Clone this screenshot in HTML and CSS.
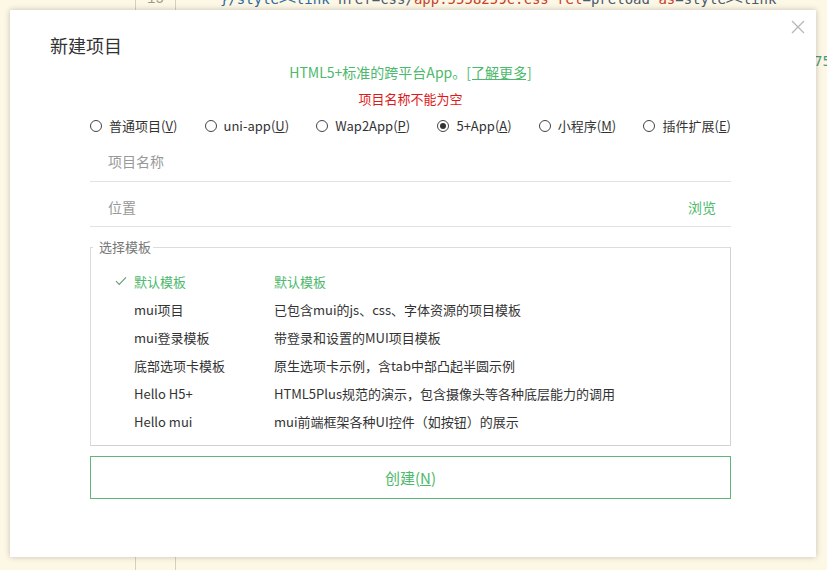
FILE: index.html
```html
<!DOCTYPE html>
<html lang="zh-CN">
<head>
<meta charset="utf-8">
<title>新建项目</title>
<link rel="stylesheet" href="styles.css">
</head>
<body>
<div class="editor">
  <div class="margin"></div>
  <div class="gutter"><div class="lineno">15</div></div>
  <div class="code">
    <div class="codeline"><span class="c-tag">}/style&gt;&lt;link</span> <span class="c-attr">href</span>=<span class="c-attr">css/</span><span class="c-str">app.5558259c.css</span> <span class="c-str">rel</span>=<span class="c-attr">preload</span> <span class="c-str">as</span>=<span class="c-attr">style&gt;&lt;link</span></div>
    <div class="codeline side"><span class="c-num">75</span></div>
  </div>
</div>

<div class="dialog">
  <div class="dlg-head">
    <h1 class="dlg-title">新建项目</h1>
    <svg class="close" width="14" height="14" viewBox="0 0 14 14"><path d="M1 1L13 13M13 1L1 13" stroke="#b5b5b5" stroke-width="1.2" fill="none"/></svg>
  </div>
  <div class="dlg-body">
    <p class="intro">HTML5+标准的跨平台App。<a class="more">[了解更多]</a></p>
    <p class="error">项目名称不能为空</p>
    <div class="radios">
      <label class="radio"><span class="dot"></span>普通项目(<u>V</u>)</label>
      <label class="radio"><span class="dot"></span>uni-app(<u>U</u>)</label>
      <label class="radio"><span class="dot"></span>Wap2App(<u>P</u>)</label>
      <label class="radio"><span class="dot on"></span>5+App(<u>A</u>)</label>
      <label class="radio"><span class="dot"></span>小程序(<u>M</u>)</label>
      <label class="radio"><span class="dot"></span>插件扩展(<u>E</u>)</label>
    </div>
    <div class="field first"><span class="ph">项目名称</span></div>
    <div class="field"><span class="ph">位置</span><span class="browse">浏览</span></div>
    <fieldset class="tpl">
      <legend>选择模板</legend>
      <div class="tpl-list">
        <div class="tpl-row sel"><span class="chk"><svg width="12" height="10" viewBox="0 0 12 10"><path d="M1 5.2L4.2 8.4L11 1.4" stroke="#6a9e76" stroke-width="1.2" fill="none"/></svg></span><span class="name">默认模板</span><span class="desc">默认模板</span></div>
        <div class="tpl-row"><span class="chk"></span><span class="name">mui项目</span><span class="desc">已包含mui的js、css、字体资源的项目模板</span></div>
        <div class="tpl-row"><span class="chk"></span><span class="name">mui登录模板</span><span class="desc">带登录和设置的MUI项目模板</span></div>
        <div class="tpl-row"><span class="chk"></span><span class="name">底部选项卡模板</span><span class="desc">原生选项卡示例，含tab中部凸起半圆示例</span></div>
        <div class="tpl-row"><span class="chk"></span><span class="name">Hello H5+</span><span class="desc">HTML5Plus规范的演示，包含摄像头等各种底层能力的调用</span></div>
        <div class="tpl-row"><span class="chk"></span><span class="name">Hello mui</span><span class="desc">mui前端框架各种UI控件（如按钮）的展示</span></div>
      </div>
    </fieldset>
    <button class="create">创建(<u>N</u>)</button>
  </div>
</div>
</body>
</html>
```

FILE: styles.css
```css
html, body {
  margin: 0;
  padding: 0;
  width: 827px;
  height: 570px;
  overflow: hidden;
  background: #fdf7e6;
  font-family: "Noto Sans CJK SC", "Noto Sans", sans-serif;
}

.editor {
  display: flex;
  height: 570px;
}
.margin {
  width: 135px;
  flex: none;
}
.gutter {
  width: 39px;
  flex: none;
  border-left: 1px solid #d8cfb8;
  border-right: 1px solid #d8cfb8;
}
.lineno {
  margin-top: -9px;
  text-align: center;
  font: 14px "Liberation Mono", monospace;
  color: #9a9a8a;
  line-height: 16px;
}
.code {
  flex: 1;
  padding-left: 44px;
  font: 14px "DejaVu Sans Mono", "Liberation Mono", monospace;
  line-height: 16px;
}
.codeline {
  margin-top: -9px;
  white-space: nowrap;
  color: #4a5a70;
}
.codeline.side {
  margin-top: 46px;
  padding-left: 594px;
}
.c-tag { color: #2a6aa0; }
.c-attr { color: #4a5a70; }
.c-str { color: #c8402a; }
.c-num { color: #4a9a7a; }

.dialog {
  position: absolute;
  left: 10px;
  top: 10px;
  width: 806px;
  height: 547px;
  background: #fff;
  box-shadow: 0 0 6px rgba(0, 0, 0, 0.22);
  box-sizing: border-box;
}
.dlg-head {
  display: flex;
  justify-content: space-between;
  align-items: flex-start;
  padding: 10px 11px 0 40px;
}
.dlg-title {
  margin: 0;
  padding-top: 12px;
  font-size: 18px;
  font-weight: normal;
  color: #333;
  line-height: 26px;
}
.dlg-body {
  padding: 0 85px 0 80px;
}
.intro {
  margin: 4px 0 0;
  text-align: center;
  font-size: 14px;
  line-height: 20px;
  color: #4cb96c;
}
.more {
  text-decoration: underline;
  color: #4cb96c;
}
.error {
  margin: 8px 0 0;
  text-align: center;
  font-size: 13px;
  line-height: 18px;
  color: #dd1a1a;
}
.radios {
  display: flex;
  justify-content: space-between;
  margin-top: 9px;
  height: 18px;
  align-items: center;
}
.radio {
  display: flex;
  align-items: center;
  font-size: 13px;
  color: #333;
  line-height: 18px;
}
.radio u { text-decoration: underline; }
.dot {
  width: 12px;
  height: 12px;
  border: 1px solid #444;
  border-radius: 50%;
  margin-right: 7px;
  box-sizing: border-box;
  display: flex;
  align-items: center;
  justify-content: center;
}
.dot.on::after {
  content: "";
  width: 6px;
  height: 6px;
  border-radius: 50%;
  background: #333;
}
.field {
  display: flex;
  justify-content: space-between;
  align-items: center;
  box-sizing: border-box;
  height: 45px;
  padding: 5px 15px 0 18px;
  border-bottom: 1px solid #e2e2e2;
  font-size: 14px;
}
.field.first {
  height: 47px;
}
.ph { color: #999; }
.browse { color: #4cb96c; }

.tpl {
  margin: 12px 0 0;
  padding: 12px 0 10px;
  border: 1px solid #dcdcdc;
  border-bottom-color: #d2d2d2;
  border-right-color: #d2d2d2;
}
.tpl legend {
  margin-left: 2px;
  padding: 0 2px 0 6px;
  font-size: 13px;
  color: #777;
  line-height: 16px;
}
.tpl-list {
  display: flex;
  flex-direction: column;
}
.tpl-row {
  display: grid;
  grid-template-columns: 43px 140px 1fr;
  height: 28px;
  align-items: center;
  font-size: 13px;
  color: #333;
}
.chk {
  display: flex;
  justify-content: flex-end;
  padding-right: 7px;
}
.tpl-row.sel { color: #4cb96c; }

.create {
  display: block;
  width: 100%;
  margin-top: 10px;
  height: 43px;
  background: #fff;
  border: 1px solid #5cb878;
  font-family: inherit;
  font-size: 15px;
  color: #4cb96c;
  cursor: pointer;
}
```
